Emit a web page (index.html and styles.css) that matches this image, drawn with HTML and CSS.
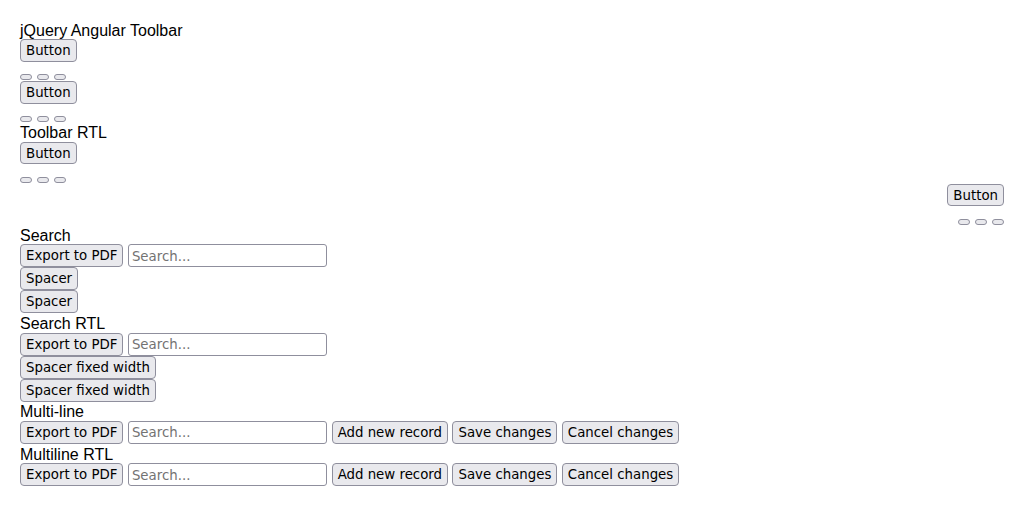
FILE: index.html
```html
<!DOCTYPE html>
<html>
<head>
<meta charset="utf-8">
<link rel="stylesheet" href="styles.css">
</head>
<body>
<div class="page">
  <div class="title">jQuery Angular Toolbar</div>
  <div class="toolbar">
    <div class="items"><button class="btn">Button</button></div>
    <div class="overflow"><button class="dot"></button><button class="dot"></button><button class="dot"></button></div>
  </div>
  <div class="toolbar">
    <div class="items"><button class="btn">Button</button></div>
    <div class="overflow"><button class="dot"></button><button class="dot"></button><button class="dot"></button></div>
  </div>
  <div class="title">Toolbar RTL</div>
  <div class="toolbar">
    <div class="items"><button class="btn">Button</button></div>
    <div class="overflow"><button class="dot"></button><button class="dot"></button><button class="dot"></button></div>
  </div>
  <div class="toolbar rtl">
    <div class="items"><button class="btn">Button</button></div>
    <div class="overflow"><button class="dot"></button><button class="dot"></button><button class="dot"></button></div>
  </div>
  <div class="title">Search</div>
  <div class="row search-row"><button class="btn">Export to PDF</button><input class="search" type="text" placeholder="Search..."></div>
  <div class="row"><button class="btn">Spacer</button></div>
  <div class="row"><button class="btn">Spacer</button></div>
  <div class="title">Search RTL</div>
  <div class="row search-row"><button class="btn">Export to PDF</button><input class="search" type="text" placeholder="Search..."></div>
  <div class="row"><button class="btn">Spacer fixed width</button></div>
  <div class="row"><button class="btn">Spacer fixed width</button></div>
  <div class="title">Multi-line</div>
  <div class="row search-row"><button class="btn">Export to PDF</button><input class="search" type="text" placeholder="Search..."><button class="btn">Add new record</button><button class="btn">Save changes</button><button class="btn">Cancel changes</button></div>
  <div class="title">Multiline RTL</div>
  <div class="row search-row"><button class="btn">Export to PDF</button><input class="search" type="text" placeholder="Search..."><button class="btn">Add new record</button><button class="btn">Save changes</button><button class="btn">Cancel changes</button></div>
</div>
</body>
</html>
```

FILE: styles.css
```css
body {
  margin: 0;
  font-family: "Liberation Sans", Arial, sans-serif;
  font-size: 16px;
  color: #000;
  background: #fff;
}
.page {
  padding: 20px;
}
.title {
  padding-top: 2.8px;
  line-height: 15.6px;
}
.btn, .dot, .search {
  font-family: "DejaVu Sans", sans-serif;
  font-size: 13.333px;
  color: #000;
  margin: 0;
}
.btn, .dot {
  box-sizing: border-box;
  background: #e9e9ed;
  border: 1px solid #8f8f9d;
  border-radius: 4px;
}
.btn {
  height: 22.6px;
  padding: 3px 5px 1px;
  line-height: 16.6px;
  white-space: nowrap;
}
.dot {
  width: 12px;
  height: 6px;
  padding: 0;
}
.items {
  display: flex;
  padding-top: 1px;
  height: 22.6px;
}
.overflow {
  display: flex;
  gap: 5px;
  align-items: flex-start;
  height: 18.4px;
  padding-top: 12.4px;
  box-sizing: border-box;
}
.rtl .items, .rtl .overflow {
  justify-content: flex-end;
}
.row {
  display: flex;
  align-items: flex-start;
  gap: 4.45px;
}
.row .btn {
  height: 23px;
}
.search-row {
  padding-top: 1px;
}
.search {
  box-sizing: border-box;
  width: 199.3px;
  height: 23px;
  border: 1px solid #8f8f9d;
  border-radius: 3px;
  padding: 1px 3px 0;
  background: #fff;
}
.search::placeholder {
  color: #737373;
}
```
